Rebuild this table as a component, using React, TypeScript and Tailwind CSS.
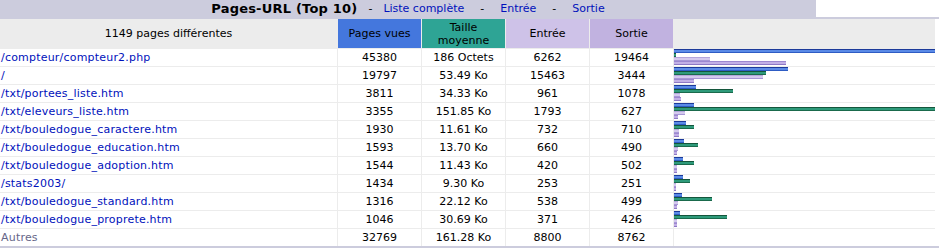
import React from "react";

type Row = {
  url: string;
  pages: string;
  size: string;
  entry: string;
  exit: string;
  bars: [number, number, number, number];
  other?: boolean;
};

const rows: Row[] = [
  { url: "/compteur/compteur2.php", pages: "45380", size: "186 Octets", entry: "6262", exit: "19464", bars: [261, 2, 36, 112] },
  { url: "/", pages: "19797", size: "53.49 Ko", entry: "15463", exit: "3444", bars: [114, 92, 89, 20] },
  { url: "/txt/portees_liste.htm", pages: "3811", size: "34.33 Ko", entry: "961", exit: "1078", bars: [22, 59, 6, 7] },
  { url: "/txt/eleveurs_liste.htm", pages: "3355", size: "151.85 Ko", entry: "1793", exit: "627", bars: [20, 261, 11, 4] },
  { url: "/txt/bouledogue_caractere.htm", pages: "1930", size: "11.61 Ko", entry: "732", exit: "710", bars: [12, 20, 5, 5] },
  { url: "/txt/bouledogue_education.htm", pages: "1593", size: "13.70 Ko", entry: "660", exit: "490", bars: [10, 24, 4, 3] },
  { url: "/txt/bouledogue_adoption.htm", pages: "1544", size: "11.43 Ko", entry: "420", exit: "502", bars: [9, 20, 3, 3] },
  { url: "/stats2003/", pages: "1434", size: "9.30 Ko", entry: "253", exit: "251", bars: [9, 16, 2, 2] },
  { url: "/txt/bouledogue_standard.htm", pages: "1316", size: "22.12 Ko", entry: "538", exit: "499", bars: [8, 38, 4, 3] },
  { url: "/txt/bouledogue_proprete.htm", pages: "1046", size: "30.69 Ko", entry: "371", exit: "426", bars: [6, 53, 3, 3] },
  { url: "Autres", pages: "32769", size: "161.28 Ko", entry: "8800", exit: "8762", bars: [0, 0, 0, 0], other: true },
];

const barClasses = [
  "bg-[linear-gradient(#1c3a9a_25%,#5a8ae6_25%,#5a8ae6_75%,#2e5cc4_75%)]",
  "bg-[linear-gradient(#14563c_25%,#2e9a7a_25%,#2e9a7a_75%,#1a6a4c_75%)]",
  "bg-[linear-gradient(#b4a6dc_25%,#d4c9ee_25%,#d4c9ee_75%,#a898d6_75%)]",
  "bg-[linear-gradient(#9d88d0_25%,#c2b0e6_25%,#c2b0e6_75%,#8e78c4_75%)]",
];

function Sep({ wide }: { wide?: boolean }) {
  return (
    <span className={`flex justify-center ${wide ? "w-[36px]" : "w-[26px]"}`}>-</span>
  );
}

export default function App() {
  return (
    <div className="w-[939px] h-[248px] bg-white font-['DejaVu_Sans','Liberation_Sans',sans-serif] text-[11px] text-black leading-[13px]">
      {/* Title row */}
      <div className="flex h-[17px]">
        <div className="w-[816px] bg-[#ccccdd] flex items-center justify-center">
          <span className="text-[13px] font-bold leading-[15px] tracking-[0.2px]">Pages-URL (Top 10)</span>
          <Sep />
          <span className="text-[#0011bb]">Liste complète</span>
          <Sep wide />
          <span className="text-[#0011bb]">Entrée</span>
          <Sep wide />
          <span className="text-[#0011bb]">Sortie</span>
        </div>
        <div className="flex-1 bg-white" />
      </div>
      {/* Data block */}
      <div className="bg-[#ccccdd] pt-[2px] pb-[2px]">
        <div className="bg-white">
          <div className="grid w-[935px] grid-cols-[338px_84px_84px_84px_84px_261px]">
            {/* header */}
            <div className="h-[30px] bg-[#ececec] border-r border-b border-[#ececec] flex items-center justify-center">
              1149 pages différentes
            </div>
            <div className="h-[30px] bg-[#4477dd] border-r border-b border-[#ececec] flex items-center justify-center">
              Pages vues
            </div>
            <div className="h-[30px] bg-[#2ea495] border-r border-b border-[#ececec] flex items-center justify-center text-center">
              Taille
              <br />
              moyenne
            </div>
            <div className="h-[30px] bg-[#cec2e8] border-r border-b border-[#ececec] flex items-center justify-center">
              Entrée
            </div>
            <div className="h-[30px] bg-[#c1b2e0] border-r border-b border-[#ececec] flex items-center justify-center">
              Sortie
            </div>
            <div className="h-[30px] bg-[#ececec] border-b border-[#ececec]" />
            {rows.map((r, i) => {
              const last = i === rows.length - 1;
              const base = last ? "h-[17px]" : "h-[18px] border-b";
              return (
                <React.Fragment key={r.url}>
                  <div
                    className={`${base} border-r border-[#ececec] flex items-center pl-[1px] tracking-[0.2px] ${
                      r.other ? "text-[#666688]" : "text-[#0011bb]"
                    }`}
                  >
                    {r.url}
                  </div>
                  <div className={`${base} border-r border-[#ececec] flex items-center justify-center`}>{r.pages}</div>
                  <div className={`${base} border-r border-[#ececec] flex items-center justify-center`}>{r.size}</div>
                  <div className={`${base} border-r border-[#ececec] flex items-center justify-center`}>{r.entry}</div>
                  <div className={`${base} border-r border-[#ececec] flex items-center justify-center`}>{r.exit}</div>
                  <div className={`${base} border-[#ececec] flex flex-col`}>
                    {!r.other &&
                      r.bars.map((w, j) => (
                        <div key={j} className={`h-[4px] ${barClasses[j]}`} style={{ width: Math.max(1, w) }} />
                      ))}
                  </div>
                </React.Fragment>
              );
            })}
          </div>
        </div>
      </div>
    </div>
  );
}
